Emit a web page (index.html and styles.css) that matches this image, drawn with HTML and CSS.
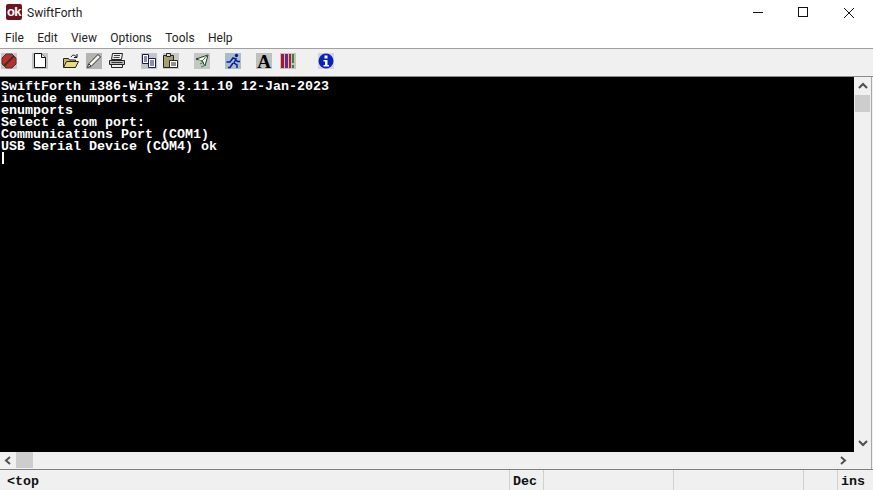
FILE: index.html
```html
<!DOCTYPE html>
<html lang="en">
<head>
<meta charset="utf-8">
<title>SwiftForth</title>
<link rel="stylesheet" href="styles.css">
</head>
<body>
<div class="window">
  <header class="titlebar">
    <div class="logo">ok</div>
    <div class="title">SwiftForth</div>
    <div class="controls">
      <svg class="ctl" width="46" height="24" viewBox="0 0 46 24"><path d="M18 12.500h10" stroke="#111" fill="none"/></svg>
      <svg class="ctl" width="46" height="24" viewBox="0 0 46 24"><rect x="17.500" y="7.500" width="9" height="9" stroke="#111" fill="none"/></svg>
      <svg class="ctl" width="46" height="24" viewBox="0 0 46 24"><path d="M17 8l10 10M27 8l-10 10" stroke="#111" fill="none"/></svg>
    </div>
  </header>
  <nav class="menubar">
    <span class="menu">File</span><span class="menu">Edit</span><span class="menu">View</span><span class="menu">Options</span><span class="menu">Tools</span><span class="menu">Help</span>
  </nav>
  <div class="toolbar">
    <svg class="tool t-stop" width="16" height="16" viewBox="0 0 16 16"><rect width="16" height="16" fill="#c8c8c8"/><path d="M5 1h6l4 4v6l-4 4H5l-4-4V5z" fill="#b8302c" stroke="#4a3030"/><path d="M3 13L13 3" stroke="#3a3030" stroke-width="2"/></svg>
    <svg class="tool t-new" width="16" height="16" viewBox="0 0 16 16"><rect width="16" height="16" fill="#c4c4c4"/><path d="M2.500 .5h7l4 4v10h-11z" fill="#fff" stroke="#111"/><path d="M9.500 .5v4h4" fill="#eee" stroke="#111"/></svg>
    <svg class="tool t-open" width="16" height="16" viewBox="0 0 16 16"><path d="M.5 5.500h5l1 1.500h6v7h-12z" fill="#c9c25a" stroke="#222"/><path d="M.5 14.500l3-6h12l-3 6z" fill="#e6dc7a" stroke="#222"/><path d="M8 4c1.500-2.500 3.500-2.500 5.500 0M14 1v3.500h-3" fill="none" stroke="#111"/></svg>
    <svg class="tool t-edit" width="16" height="16" viewBox="0 0 16 16"><rect width="16" height="16" fill="#b4b4b4"/><path d="M1.500 14.500l1-3.500 9.500-9.500 2.500 2.500L5 13.500z" fill="#f4f4e8" stroke="#2a2a2a"/><path d="M3 11l2 2" stroke="#2a2a2a"/></svg>
    <svg class="tool t-print" width="16" height="16" viewBox="0 0 16 16"><path d="M3.500 .5h10l-1 6H2.500z" fill="#eee" stroke="#222"/><path d="M.5 7.500h15v4H.5z" fill="#bbb" stroke="#222"/><path d="M2.500 11.500h11v3h-11z" fill="#f0f0f0" stroke="#222"/><path d="M5 2.500h6M4.500 4.500h6" stroke="#444"/><path d="M2.500 9.500h11" stroke="#333"/></svg>
    <svg class="tool t-copy" width="16" height="16" viewBox="0 0 16 16"><rect width="16" height="16" fill="#c4c4cc"/><path d="M1.500 1.500h6v9h-6z" fill="#fff" stroke="#1a1a4a"/><path d="M7.500 5.500h7v9h-7z" fill="#fff" stroke="#1a1a4a"/><path d="M3 4h3M3 6h3M3 8h3M9 8h4M9 10h4M9 12h4" stroke="#1a1a4a"/></svg>
    <svg class="tool t-paste" width="16" height="16" viewBox="0 0 16 16"><rect width="16" height="16" fill="#c8c8c8"/><path d="M.5 2.500h10v12H.5z" fill="#a8a06c" stroke="#222"/><path d="M3.500 .5h4v3h-4z" fill="#ddd" stroke="#222"/><path d="M6.500 7.500h8v7h-8z" fill="#fff" stroke="#222"/><path d="M8 10h5M8 12h5" stroke="#222"/></svg>
    <svg class="tool t-check" width="16" height="16" viewBox="0 0 16 16"><rect width="16" height="16" fill="#c4c8c4"/><path d="M2 6l12-4-3 11-3-5z" fill="#f4f8e4" stroke="#1e3a3a"/><path d="M8 8l6-6M6 11l4-2M7 14l5-2" stroke="#2a8a5a"/><path d="M10 4l2 1M4 7l3 1" stroke="#c8c040"/></svg>
    <svg class="tool t-run" width="16" height="16" viewBox="0 0 16 16"><rect width="16" height="16" fill="#a9bccc"/><circle cx="11.500" cy="2.500" r="1.700" fill="#0a1c9a"/><path d="M1.500 9h3.500l3-4 3 1-2 4 3 2v3M8 10l-3 4.500H3M10.500 6.500l2 2h2.500" fill="none" stroke="#0a1c9a" stroke-width="1.500"/></svg>
    <div class="tool t-font">A</div>
    <svg class="tool t-color" width="16" height="16" viewBox="0 0 16 16"><rect width="16" height="16" fill="#c8c0c0"/><path d="M1 1h3v14H1z" fill="#a01838"/><path d="M5 1h3v14H5z" fill="#6a2a80"/><path d="M9 1h2v14H9z" fill="#b02030"/><path d="M12 1h2v9h-2zM12 12h2v3h-2z" fill="#2e8a3a"/></svg>
    <svg class="tool t-info" width="16" height="16" viewBox="0 0 16 16"><rect width="16" height="16" fill="#d4d4dc"/><circle cx="8" cy="8" r="7.500" fill="#0b22b8"/><rect x="6.500" y="2.500" width="3" height="3" fill="#fff"/><path d="M5.500 7h4v5h1.500v1.500H5.500V12H7V8.500H5.500z" fill="#fff"/></svg>
  </div>
  <main class="client">
    <pre class="terminal">SwiftForth i386-Win32 3.11.10 12-Jan-2023
include enumports.f  ok
enumports
Select a com port:
Communications Port (COM1)
USB Serial Device (COM4) ok
<span class="caret"></span></pre>
    <div class="vscroll">
      <svg width="16" height="18" viewBox="0 0 16 18"><path d="M4 11l4-4 4 4" fill="none" stroke="#505050" stroke-width="2"/></svg>
      <div class="vtrack"><div class="vthumb"></div></div>
      <svg width="16" height="18" viewBox="0 0 16 18"><path d="M4 7l4 4 4-4" fill="none" stroke="#505050" stroke-width="2"/></svg>
    </div>
  </main>
  <div class="hscroll">
    <svg width="16" height="17" viewBox="0 0 16 17"><path d="M10 5l-4 3.500 4 3.500" fill="none" stroke="#505050" stroke-width="2"/></svg>
    <div class="hthumb"></div>
    <div class="htrack"></div>
    <svg width="18" height="17" viewBox="0 0 18 17"><path d="M8 5l4 3.500-4 3.500" fill="none" stroke="#505050" stroke-width="2"/></svg>
    <div class="hcorner"></div>
  </div>
  <footer class="status">
    <div class="cell c1">&lt;top</div>
    <div class="cell c2">Dec</div>
    <div class="cell c3"></div>
    <div class="cell c3"></div>
    <div class="cell c2"></div>
    <div class="cell c5">ins</div>
  </footer>
</div>
</body>
</html>
```
FILE: styles.css
```css
* { box-sizing: border-box; }
html, body { margin: 0; padding: 0; width: 873px; height: 490px; overflow: hidden; background: #f0f0f0; }
.window { display: flex; flex-direction: column; width: 873px; height: 490px; font-family: Roboto, "Noto Sans", sans-serif; }
.titlebar { display: flex; align-items: flex-start; height: 30px; background: #fff; flex: none; padding-left: 6px; padding-top: 4px; }
.logo { width: 16px; height: 16px; background: #6e1420; color: #fff; font: bold 13px/15px "Liberation Sans", sans-serif; text-align: center; border-radius: 2px; letter-spacing: -0.5px; }
.title { margin-left: 5px; font-size: 12px; line-height: 18px; color: #222; }
.controls { margin-left: auto; display: flex; margin-top: -4px; }
.ctl { display: block; }
.menubar { display: flex; height: 18px; background: #fff; flex: none; padding-left: 5px; gap: 13.4px; font-size: 12px; line-height: 16px; color: #222; }
.toolbar { position: relative; height: 29px; flex: none; background: #f0f0f0; border-top: 1px solid #a0a0a0; border-bottom: 1px solid #8c8c8c; display: flex; align-items: center; }
.tool { position: absolute; top: 4px; display: block; }
.t-stop { left: 1px; } .t-new { left: 32px; } .t-open { left: 63px; } .t-edit { left: 86px; } .t-print { left: 109px; }
.t-copy { left: 141px; } .t-paste { left: 163px; } .t-check { left: 194px; } .t-run { left: 225px; }
.t-font { left: 256px; width: 16px; height: 16px; background: #c0c0c0; color: #000; font: bold 19px/17px "Liberation Serif", serif; text-align: center; }
.t-color { left: 280px; } .t-info { left: 318px; }
.client { display: flex; flex: 1; min-height: 0; }
.terminal { flex: 1; margin: 0; padding: 4px 0 0 1px; background: #000; color: #fff; font: bold 13.33px/12px "Liberation Mono", monospace; overflow: hidden; }
.caret { display: inline-block; width: 2px; height: 12px; margin-left: 1px; margin-top: -1px; background: #fff; vertical-align: top; }
.vscroll { width: 18px; flex: none; display: flex; flex-direction: column; background: #f0f0f0; border-right: 1px solid #a8a8a8; margin-right: 1px; padding-left: 1px; }
.vtrack { flex: 1; }
.vthumb { width: 15px; height: 17px; background: #cdcdcd; }
.hscroll { display: flex; height: 17px; flex: none; background: #f0f0f0; }
.hthumb { width: 17px; height: 16px; background: #cdcdcd; }
.htrack { flex: 1; }
.hcorner { width: 21px; margin-right: 1px; border-right: 1px solid #a8a8a8; }
.status { display: flex; height: 21px; flex: none; background: #f0f0f0; border-top: 1px solid #808080; font: bold 13.33px/24px "Liberation Mono", monospace; color: #111; }
.cell { border-right: 1px solid #d0d0d0; padding-left: 3px; height: 20px; }
.c1 { width: 510px; padding-left: 7px; } .c2 { width: 34px; } .c3 { width: 130px; } .c5 { flex: 1; border-right: 0; }
```
